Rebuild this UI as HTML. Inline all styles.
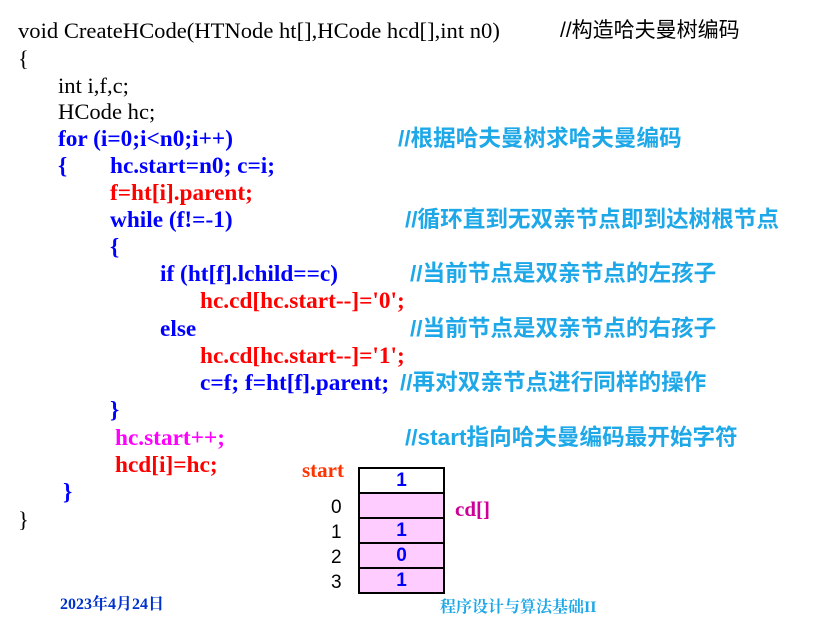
<!DOCTYPE html>
<html><head><meta charset="utf-8"><style>
body{margin:0;width:827px;height:612px;background:#fff;position:relative;overflow:hidden;font-family:"Liberation Serif","Noto Serif CJK SC",serif;}
.l{position:absolute;white-space:pre;font-size:22.6px;line-height:26px;}
.n{color:#000;}
.b{color:#0000ff;font-weight:bold;font-size:23.3px;}
.r{color:#ff0000;font-weight:bold;font-size:23.3px;}
.m{color:#ff00ff;font-weight:bold;font-size:23.3px;}
.c{color:#1ea8e8;font-weight:bold;font-family:"Liberation Sans","Noto Sans CJK SC",sans-serif;font-size:22.6px;}
.cz{color:#000;font-family:"Liberation Sans","Noto Sans CJK SC",sans-serif;font-size:21px;}
table{position:absolute;left:358px;top:467px;border-collapse:collapse;}
td{width:83px;height:23px;border:2px solid #000;text-align:center;font:bold 19px "Liberation Sans",sans-serif;color:#0000ff;padding:0;}
.p{background:#ffccff;}
.idx{position:absolute;font:19px "Liberation Sans",sans-serif;color:#000;left:331px;}
</style></head><body>
<div class="l n" style="left:18px;top:18px">void CreateHCode(HTNode ht[],HCode hcd[],int n0)</div>
<div class="l cz" style="left:560px;top:18px">//构造哈夫曼树编码</div>
<div class="l n" style="left:18px;top:46px">{</div>
<div class="l n" style="left:58px;top:73px">int i,f,c;</div>
<div class="l n" style="left:58px;top:99px">HCode hc;</div>
<div class="l b" style="left:58px;top:126px">for (i=0;i&lt;n0;i++)</div>
<div class="l c" style="left:398px;top:126px">//根据哈夫曼树求哈夫曼编码</div>
<div class="l b" style="left:58px;top:153px">{</div>
<div class="l b" style="left:110px;top:153px">hc.start=n0; c=i;</div>
<div class="l r" style="left:110px;top:180px">f=ht[i].parent;</div>
<div class="l b" style="left:110px;top:207px">while (f!=-1)</div>
<div class="l c" style="left:405px;top:207px">//循环直到无双亲节点即到达树根节点</div>
<div class="l b" style="left:110px;top:234px">{</div>
<div class="l b" style="left:160px;top:261px">if (ht[f].lchild==c)</div>
<div class="l c" style="left:410px;top:261px">//当前节点是双亲节点的左孩子</div>
<div class="l r" style="left:200px;top:288px">hc.cd[hc.start--]='0';</div>
<div class="l b" style="left:160px;top:316px">else</div>
<div class="l c" style="left:410px;top:316px">//当前节点是双亲节点的右孩子</div>
<div class="l r" style="left:200px;top:343px">hc.cd[hc.start--]='1';</div>
<div class="l b" style="left:200px;top:370px">c=f; f=ht[f].parent;</div>
<div class="l c" style="left:400px;top:370px">//再对双亲节点进行同样的操作</div>
<div class="l b" style="left:110px;top:397px">}</div>
<div class="l m" style="left:115px;top:425px">hc.start++;</div>
<div class="l c" style="left:405px;top:425px">//start指向哈夫曼编码最开始字符</div>
<div class="l r" style="left:115px;top:452px">hcd[i]=hc;</div>
<div class="l b" style="left:63px;top:479px">}</div>
<div class="l n" style="left:18px;top:507px">}</div>
<div class="l" style="left:302px;top:457px;color:#ff3300;font-weight:bold;font-size:21px">start</div>
<table>
<tr><td>1</td></tr>
<tr><td class="p"></td></tr>
<tr><td class="p">1</td></tr>
<tr><td class="p">0</td></tr>
<tr><td class="p">1</td></tr>
</table>
<div class="idx" style="top:497px">0</div>
<div class="idx" style="top:522px">1</div>
<div class="idx" style="top:547px">2</div>
<div class="idx" style="top:572px">3</div>
<div class="l" style="left:455px;top:496px;color:#cc0099;font-weight:bold;font-size:21px">cd[]</div>
<div class="l" style="left:60px;top:592px;color:#0033cc;font-weight:bold;font-size:16px">2023年4月24日</div>
<div class="l" style="left:440px;top:595px;color:#1ea8e8;font-weight:bold;font-size:16px">程序设计与算法基础II</div>
</body></html>
